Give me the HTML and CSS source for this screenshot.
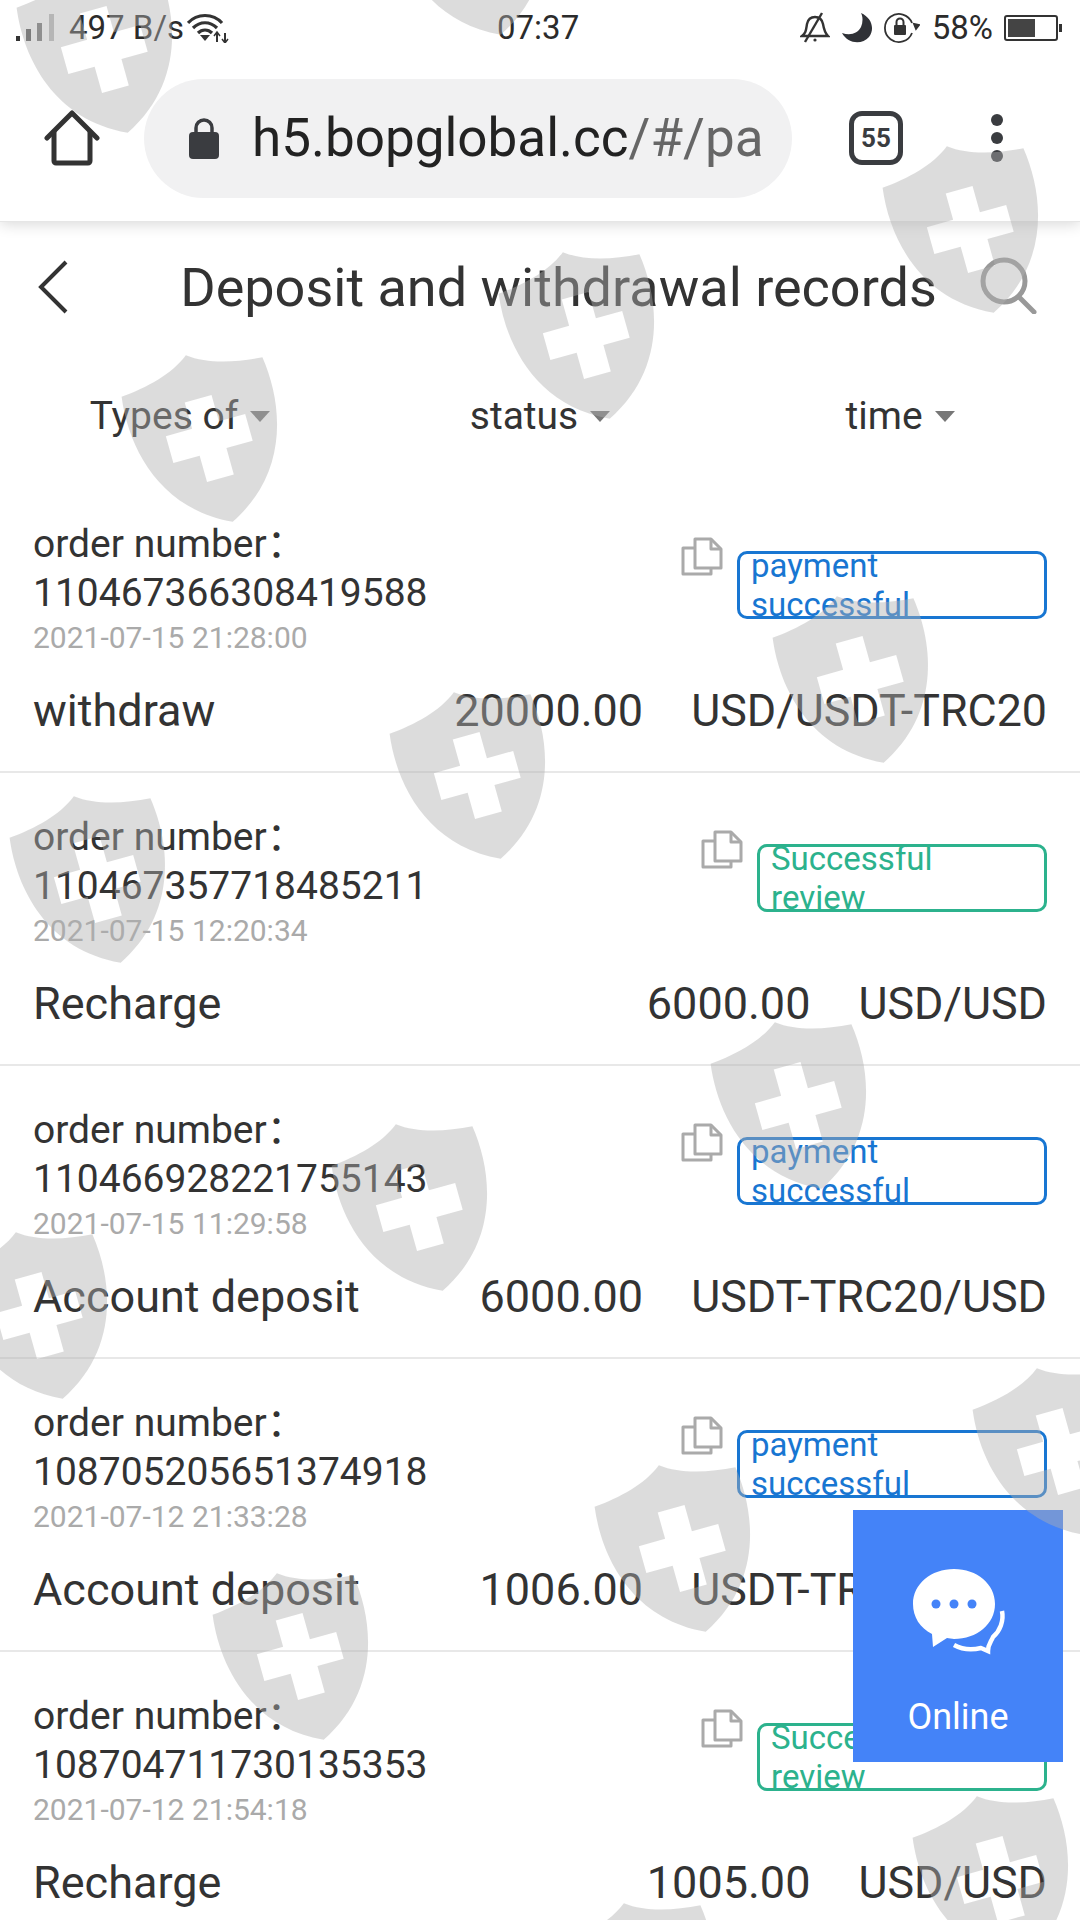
FILE: index.html
```html
<!DOCTYPE html>
<html lang="en">
<head>
<meta charset="utf-8">
<title>Deposit and withdrawal records</title>
<link rel="stylesheet" href="styles.css">
</head>
<body>
<div class="screen">
  <div class="statusbar">
    <div class="st-left">
      <svg class="ic-signal" width="40" height="32" viewBox="0 0 40 32"><rect x="0" y="24" width="4" height="5" fill="#333"/><rect x="10" y="17" width="5" height="12" fill="#555"/><rect x="21" y="11" width="5" height="18" fill="#777"/><rect x="33" y="2" width="5" height="27" fill="#bbb"/></svg>
      <span class="st-speed">497 B/s</span>
      <svg class="ic-wifi" width="42" height="30" viewBox="0 0 42 30" fill="none" stroke="#333" stroke-width="3.200"><path d="M1 10C10 0 26 0 35 10"/><path d="M6 15C13 8 23 8 30 15"/><path d="M11 20C15 16 21 16 25 20"/><path d="M13 22h10l-5 6z" fill="#333" stroke="none"/><path d="M30 29V20M38 20v9" stroke-width="2"/><path d="M27 23l3-4 3 4M35 26l3 4 3-4" stroke-width="1.500"/></svg>
    </div>
    <span class="st-time">07:37</span>
    <div class="st-right">
      <svg width="30" height="32" viewBox="0 0 30 32" fill="none" stroke="#333" stroke-width="2.400"><path d="M2 24c4-3 4-6 5-12 1-5 4-7 8-7s7 2 8 7c1 6 2 9 5 12z"/><path d="M22 1L5 30"/><circle cx="15" cy="28" r="1.600" fill="#333" stroke="none"/></svg>
      <svg class="ic-moon" width="32" height="32" viewBox="0 0 32 32"><path d="M20 1C31 6 34 17 28 25 21 33 7 32 1 21 10 24 17 21 20 15 22 10 22 5 20 1z" fill="#2f3136"/></svg>
      <svg class="ic-rot" width="36" height="32" viewBox="0 0 36 32" fill="none" stroke="#333" stroke-width="1.800"><path d="M28 21A14 14 0 1 1 28 11"/><path d="M30 12l5 1-3 4z" fill="#333"/><rect x="10" y="13" width="12" height="10" rx="1" fill="#333" stroke="none"/><path d="M12.500 13V10a3.500 3.500 0 0 1 7 0v3" stroke-width="2"/></svg>
      <span class="st-batt">58%</span>
      <div class="battery"><div class="battery-fill"></div></div>
    </div>
  </div>

  <div class="toolbar">
    <svg class="ic-home" width="56" height="56" viewBox="0 0 56 56" fill="none" stroke="#333" stroke-width="5" stroke-linejoin="round" stroke-linecap="round"><path d="M3 28L28 3l25 25"/><path d="M10 22v29a2 2 0 0 0 2 2h32a2 2 0 0 0 2-2V22"/></svg>
    <div class="urlbar">
      <svg width="32" height="42" viewBox="0 0 32 42"><path d="M8 17v-6a8 8 0 0 1 16 0v6" fill="none" stroke="#3a3c40" stroke-width="3.500"/><rect x="1" y="15" width="30" height="27" rx="4" fill="#3a3c40"/></svg>
      <span class="url"><span class="url-host">h5.bopglobal.cc</span><span class="url-path">/#/pa</span></span>
    </div>
    <div class="tabs">55</div>
    <div class="menu"><i></i><i></i><i></i></div>
  </div>

  <div class="pagehead">
    <svg width="32" height="54" viewBox="0 0 32 54" fill="none" stroke="#333" stroke-width="4"><path d="M29 2L4 27l25 25"/></svg>
    <h1 class="title">Deposit and withdrawal records</h1>
    <svg class="search" width="58" height="58" viewBox="0 0 58 58" fill="none" stroke="#999" stroke-width="5"><circle cx="25" cy="25" r="21"/><path d="M40 41l15 15" stroke-linecap="round"/></svg>
  </div>

  <div class="filters">
    <div class="filter">Types of<i class="caret"></i></div>
    <div class="filter">status<i class="caret"></i></div>
    <div class="filter">time<i class="caret"></i></div>
  </div>

  <div class="record">
    <div class="rec-top">
      <div class="rec-id"><div class="label">order number：</div><div class="label">110467366308419588</div><div class="date">2021-07-15 21:28:00</div></div>
      <div class="rec-state"><svg class="copy" width="42" height="42" viewBox="0 0 42 42" fill="none" stroke="#aaa" stroke-width="3" stroke-linejoin="round"><path d="M14 32V3h16l10 10v19z"/><path d="M30 3v10h10"/><path d="M14 12H2v26h28v-6"/></svg><div class="tag tag-pay">payment successful</div></div>
    </div>
    <div class="rec-main"><span class="name">withdraw</span><span class="amount">20000.00</span><span class="unit">USD/USDT-TRC20</span></div>
  </div>

  <div class="record">
    <div class="rec-top">
      <div class="rec-id"><div class="label">order number：</div><div class="label">110467357718485211</div><div class="date">2021-07-15 12:20:34</div></div>
      <div class="rec-state"><svg class="copy" width="42" height="42" viewBox="0 0 42 42" fill="none" stroke="#aaa" stroke-width="3" stroke-linejoin="round"><path d="M14 32V3h16l10 10v19z"/><path d="M30 3v10h10"/><path d="M14 12H2v26h28v-6"/></svg><div class="tag tag-ok">Successful review</div></div>
    </div>
    <div class="rec-main"><span class="name">Recharge</span><span class="amount">6000.00</span><span class="unit">USD/USD</span></div>
  </div>

  <div class="record">
    <div class="rec-top">
      <div class="rec-id"><div class="label">order number：</div><div class="label">110466928221755143</div><div class="date">2021-07-15 11:29:58</div></div>
      <div class="rec-state"><svg class="copy" width="42" height="42" viewBox="0 0 42 42" fill="none" stroke="#aaa" stroke-width="3" stroke-linejoin="round"><path d="M14 32V3h16l10 10v19z"/><path d="M30 3v10h10"/><path d="M14 12H2v26h28v-6"/></svg><div class="tag tag-pay">payment successful</div></div>
    </div>
    <div class="rec-main"><span class="name">Account deposit</span><span class="amount">6000.00</span><span class="unit">USDT-TRC20/USD</span></div>
  </div>

  <div class="record">
    <div class="rec-top">
      <div class="rec-id"><div class="label">order number：</div><div class="label">108705205651374918</div><div class="date">2021-07-12 21:33:28</div></div>
      <div class="rec-state"><svg class="copy" width="42" height="42" viewBox="0 0 42 42" fill="none" stroke="#aaa" stroke-width="3" stroke-linejoin="round"><path d="M14 32V3h16l10 10v19z"/><path d="M30 3v10h10"/><path d="M14 12H2v26h28v-6"/></svg><div class="tag tag-pay">payment successful</div></div>
    </div>
    <div class="rec-main"><span class="name">Account deposit</span><span class="amount">1006.00</span><span class="unit">USDT-TRC20/USD</span></div>
  </div>

  <div class="record">
    <div class="rec-top">
      <div class="rec-id"><div class="label">order number：</div><div class="label">108704711730135353</div><div class="date">2021-07-12 21:54:18</div></div>
      <div class="rec-state"><svg class="copy" width="42" height="42" viewBox="0 0 42 42" fill="none" stroke="#aaa" stroke-width="3" stroke-linejoin="round"><path d="M14 32V3h16l10 10v19z"/><path d="M30 3v10h10"/><path d="M14 12H2v26h28v-6"/></svg><div class="tag tag-ok">Successful review</div></div>
    </div>
    <div class="rec-main"><span class="name">Recharge</span><span class="amount">1005.00</span><span class="unit">USD/USD</span></div>
  </div>

  <div class="online">
    <svg width="96" height="96" viewBox="0 0 96 96"><path d="M44 3C21 3 3 18 3 38c0 13 7 24 19 30l1 13 14-9c2 0 5 1 7 1 23 0 41-15 41-35S67 3 44 3z" fill="#fff"/><circle cx="26" cy="38" r="4.500" fill="#4483f8"/><circle cx="44" cy="38" r="4.500" fill="#4483f8"/><circle cx="62" cy="38" r="4.500" fill="#4483f8"/><path d="M92 45c2 10-2 20-9 26-2 5-5 7-5 14l-7-3c-8 2-18 2-27-3" fill="none" stroke="#fff" stroke-width="4.500"/></svg>
    <span>Online</span>
  </div>

  <svg class="watermarks" width="1080" height="1920" viewBox="0 0 1080 1920">
    <defs>
      <path id="shield" fill-rule="evenodd" d="M0-22C-18-8-45-2-71 0-78 50-65 115 0 146 65 115 78 50 71 0 45-2 18-8 0-22ZM-13.500 22H13.500V48.500H40V75.500H13.500V102H-13.500V75.500H-40V48.500H-13.500Z"/>
    </defs>
    <g class="wm">
      <use href="#shield" transform="translate(87 -12) rotate(-15.700) scale(1.030)"/>
      <use href="#shield" transform="translate(460 -110) rotate(-15.700) scale(1.030)"/>
      <use href="#shield" transform="translate(953 168) rotate(-15.700) scale(1.030)"/>
      <use href="#shield" transform="translate(569 274) rotate(-15.700) scale(1.030)"/>
      <use href="#shield" transform="translate(192 377) rotate(-15.700) scale(1.030)"/>
      <use href="#shield" transform="translate(843 618) rotate(-15.700) scale(1.030)"/>
      <use href="#shield" transform="translate(460 714) rotate(-15.700) scale(1.030)"/>
      <use href="#shield" transform="translate(80 818) rotate(-15.700) scale(1.030)"/>
      <use href="#shield" transform="translate(781 1044) rotate(-15.700) scale(1.030)"/>
      <use href="#shield" transform="translate(402 1146) rotate(-15.700) scale(1.030)"/>
      <use href="#shield" transform="translate(22 1254) rotate(-15.700) scale(1.030)"/>
      <use href="#shield" transform="translate(1043 1390) rotate(-15.700) scale(1.030)"/>
      <use href="#shield" transform="translate(665 1487) rotate(-15.700) scale(1.030)"/>
      <use href="#shield" transform="translate(283 1595) rotate(-15.700) scale(1.030)"/>
      <use href="#shield" transform="translate(983 1818) rotate(-15.700) scale(1.030)"/>
      <use href="#shield" transform="translate(630 1925) rotate(-15.700) scale(1.030)"/>
    </g>
  </svg>
</div>
</body>
</html>
```

FILE: styles.css
```css
* { box-sizing: border-box; }
html, body { margin: 0; padding: 0; }
body { font-family: Roboto, "Noto Sans CJK SC", sans-serif; background: #fff; color: #333; }
.screen { position: relative; width: 1080px; height: 1920px; overflow: hidden; background: #fff; }

.statusbar { height: 55px; display: flex; align-items: center; justify-content: space-between; padding: 0 22px 0 16px; position: relative; z-index: 1; background: #fff; font-size: 33px; color: #2b2b2b; }
.st-left, .st-right { display: flex; align-items: center; }
.ic-signal { margin-right: 13px; }
.st-speed { margin-right: 3px; }
.st-time { position: absolute; left: 497px; top: 8px; }
.st-right { gap: 11px; }
.st-batt { margin-left: 1px; }
.battery { width: 54px; height: 26px; border: 2px solid #333; border-radius: 3px; padding: 2px; position: relative; }
.battery::after { content: ""; position: absolute; right: -6px; top: 7px; width: 3px; height: 8px; background: #333; }
.battery-fill { width: 58%; height: 100%; background: #444; }

.toolbar { height: 167px; display: flex; align-items: center; padding: 0 0 0 44px; border-bottom: 1px solid #e6e6e6; box-shadow: 0 2px 14px rgba(0, 0, 0, .16); position: relative; background: #fff; }
.ic-home { flex: none; }
.urlbar { width: 648px; height: 119px; margin-left: 44px; border-radius: 60px; background: #f1f1f2; display: flex; align-items: center; gap: 32px; padding-left: 44px; overflow: hidden; flex: none; }
.urlbar svg { flex: none; }
.url { font-size: 53px; white-space: nowrap; }
.url-host { color: #222; }
.url-path { color: #666; }
.tabs { width: 54px; height: 54px; margin-left: 57px; border: 5px solid #3a3c40; border-radius: 13px; font-size: 26px; font-weight: 700; color: #3a3c40; display: flex; align-items: center; justify-content: center; flex: none; }
.menu { margin-left: 88px; display: flex; flex-direction: column; gap: 6px; }
.menu i { width: 12px; height: 12px; border-radius: 50%; background: #3a3c40; display: block; }

.pagehead { height: 130px; display: flex; align-items: center; padding: 0 43px 0 37px; }
.title { flex: 1; margin: 0; font-size: 54px; font-weight: 400; color: #333; text-align: center; padding-left: 69px; white-space: nowrap; }
.search { margin-bottom: 4px; }

.filters { height: 128px; display: flex; align-items: center; }
.filter { flex: 1; display: flex; align-items: center; justify-content: center; font-size: 39px; color: #333; gap: 12px; }
.caret { width: 0; height: 0; border-left: 10px solid transparent; border-right: 10px solid transparent; border-top: 11px solid #777; }

.record { height: 293px; padding: 40px 33px 0; border-bottom: 2px solid #e8e8e8; }
.rec-top { display: flex; justify-content: space-between; height: 138px; }
.label { font-size: 39px; line-height: 49px; color: #333; }
.date { font-size: 30px; line-height: 40px; color: #aaa; }
.rec-state { display: flex; align-items: flex-start; gap: 14px; }
.copy { flex: none; margin-top: 16px; }
.tag { height: 68px; margin-top: 31px; padding: 0 11px; border: 3px solid; border-radius: 10px; font-size: 33px; line-height: 39px; display: flex; align-items: center; }
.tag-pay { width: 310px; color: #1876d2; border-color: #1876d2; }
.tag-ok { width: 290px; color: #2cb28d; border-color: #2cb28d; }
.rec-main { display: flex; margin-top: 25px; font-size: 45px; line-height: 56px; color: #333; }
.name { flex: 1; }
.unit { margin-left: 48px; font-size: 44.800px; }

.online { position: absolute; left: 853px; top: 1510px; width: 210px; height: 252px; background: #4483f8; color: #fff; display: flex; flex-direction: column; align-items: center; padding-top: 56px; font-size: 36px; }
.online span { margin-top: 34px; }

.watermarks { position: absolute; left: 0; top: 0; z-index: 2; pointer-events: none; }
.wm { fill: #afafaf; fill-opacity: .44; }
```
